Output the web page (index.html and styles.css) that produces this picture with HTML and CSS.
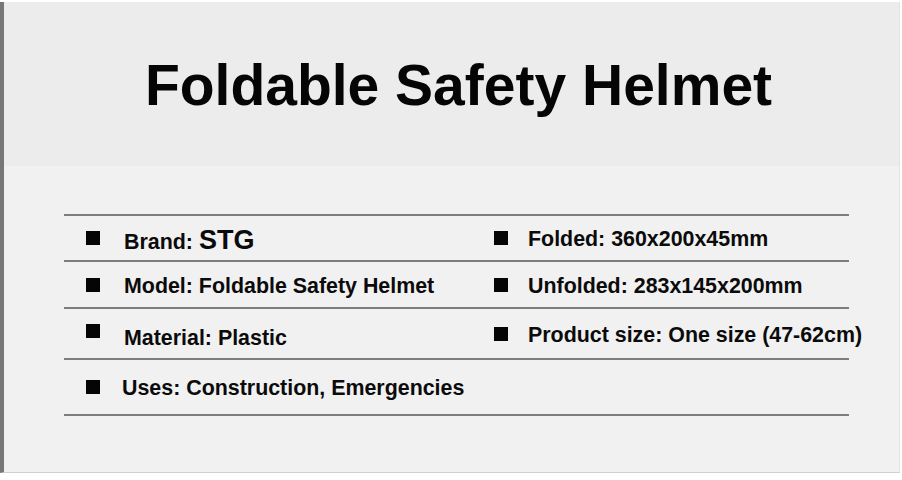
FILE: index.html
```html
<!DOCTYPE html>
<html lang="en">
<head>
<meta charset="utf-8">
<title>Foldable Safety Helmet</title>
<link rel="stylesheet" href="styles.css">
</head>
<body>
<div class="frame">
  <header class="header">
    <h1 class="title">Foldable Safety Helmet</h1>
  </header>
  <section class="specs">
    <div class="row row-1">
      <div class="cell cell-left"><span class="bullet"></span><span class="text">Brand: <span class="brand">STG</span></span></div>
      <div class="cell cell-right"><span class="bullet"></span><span class="text">Folded: 360x200x45mm</span></div>
    </div>
    <div class="row row-2">
      <div class="cell cell-left"><span class="bullet"></span><span class="text">Model: Foldable Safety Helmet</span></div>
      <div class="cell cell-right"><span class="bullet"></span><span class="text">Unfolded: 283x145x200mm</span></div>
    </div>
    <div class="row row-3">
      <div class="cell cell-left"><span class="bullet bullet-high"></span><span class="text text-low">Material: Plastic</span></div>
      <div class="cell cell-right"><span class="bullet"></span><span class="text">Product size: One size (47-62cm)</span></div>
    </div>
    <div class="row row-4">
      <div class="cell cell-left cell-uses"><span class="bullet"></span><span class="text">Uses: Construction, Emergencies</span></div>
      <div class="cell cell-right"></div>
    </div>
  </section>
</div>
</body>
</html>
```

FILE: styles.css
```css
html, body {
  margin: 0;
  padding: 0;
  background: #ffffff;
}

body {
  font-family: "Liberation Sans", Arial, sans-serif;
  color: #0b0b0b;
}

.frame {
  margin-top: 2px;
  width: 895px;
  height: 470px;
  border-left: 4px solid #777777;
  border-right: 1px solid #e2e2e2;
  border-bottom: 1px solid #cfcfcf;
  background: #f1f1f1;
  display: flex;
  flex-direction: column;
}

.header {
  height: 164px;
  background: #ececec;
  box-sizing: border-box;
  padding-top: 55px;
  padding-left: 14px;
}

.title {
  margin: 0;
  font-size: 57px;
  line-height: 57px;
  font-weight: 700;
  text-align: center;
  color: #050505;
}

.specs {
  margin-top: 48px;
  margin-left: 60px;
  width: 785px;
  border-bottom: 2px solid #7d7d7d;
}

.row {
  display: grid;
  grid-template-columns: 408px 1fr;
  border-top: 2px solid #7d7d7d;
}

.row-1 { height: 44px; }
.row-2 { height: 45px; }
.row-3 { height: 49px; }
.row-4 { height: 54px; }

.cell {
  display: flex;
  align-items: center;
  font-size: 21.4px;
  font-weight: 700;
  line-height: 1;
  white-space: nowrap;
}

.cell-left { padding-left: 22px; }
.cell-right { padding-left: 22px; }

.bullet {
  width: 14px;
  height: 14px;
  background: #050505;
  flex: none;
  margin-right: 24px;
}

.cell-right .bullet { margin-right: 20px; }

.cell-uses .bullet { margin-right: 22px; }

.text { padding-top: 4px; }

.bullet-high { margin-bottom: 6px; }

.text-low { padding-top: 10px; }

.brand {
  font-size: 27px;
}
```
